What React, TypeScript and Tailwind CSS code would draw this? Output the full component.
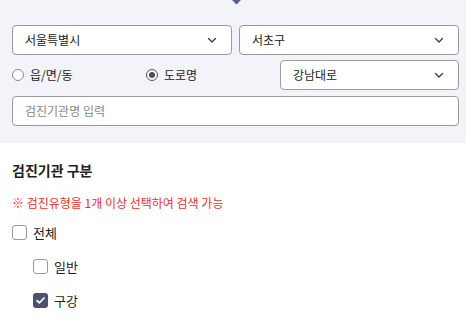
import React from "react";

const font = { fontFamily: '"Noto Sans CJK KR", "Noto Sans", sans-serif' };

function Chevron() {
  return (
    <svg width="12" height="12" viewBox="0 0 12 12" fill="none">
      <path d="M2.5 4.5l3.5 3.5 3.5-3.5" stroke="#333" strokeWidth="1.2" strokeLinecap="round" strokeLinejoin="round" />
    </svg>
  );
}

function Select({ label, className }: { label: string; className: string }) {
  return (
    <div className={`h-[30px] shrink-0 flex items-center justify-between pl-[12px] pr-[13px] bg-white border border-[#9a9a9a] rounded-[4px] ${className}`}>
      <span className="text-[12px] text-[#222] leading-none">{label}</span>
      <Chevron />
    </div>
  );
}

function Checkbox({ checked }: { checked?: boolean }) {
  return checked ? (
    <div className="w-[15px] h-[15px] rounded-[3px] bg-[#4b4f72] flex items-center justify-center">
      <svg width="11" height="11" viewBox="0 0 11 11" fill="none">
        <path d="M2 5.6l2.3 2.3L9 3" stroke="white" strokeWidth="1.7" strokeLinecap="round" strokeLinejoin="round" />
      </svg>
    </div>
  ) : (
    <div className="w-[15px] h-[15px] rounded-[3px] border border-[#9a9a9a] bg-white" />
  );
}

export default function App() {
  return (
    <div className="w-[466px] h-[319px] bg-white overflow-hidden" style={font}>
      <div className="bg-[#f3f4f9] h-[143px] relative pl-[12px] pr-[7px] pt-[25px]">
        <div className="absolute left-[233px] top-[-4px] w-[7px] h-[7px] rotate-45 bg-[#5b5f8c]" />
        <div className="flex gap-[7px]">
          <Select label="서울특별시" className="w-[220px]" />
          <Select label="서초구" className="w-[220px]" />
        </div>
        <div className="flex items-center mt-[5px] h-[30px]">
          <div className="flex items-center w-[134px]">
            <div className="w-[12px] h-[12px] rounded-full border border-[#888] bg-white" />
            <span className="ml-[6px] text-[12px] text-[#222] leading-none">읍/면/동</span>
          </div>
          <div className="flex items-center w-[134px]">
            <div className="w-[12px] h-[12px] rounded-full border border-[#555] bg-white flex items-center justify-center">
              <div className="w-[6px] h-[6px] rounded-full bg-[#4b4f72]" />
            </div>
            <span className="ml-[6px] text-[12px] text-[#222] leading-none">도로명</span>
          </div>
          <Select label="강남대로" className="w-[179px]" />
        </div>
        <div className="mt-[6px] h-[30px] bg-white border border-[#9a9a9a] rounded-[4px] flex items-center pl-[12px]">
          <span className="text-[12px] text-[#888] leading-none">검진기관명 입력</span>
        </div>
      </div>
      <div className="px-[12px]">
        <div className="mt-[20px] text-[14px] font-bold text-[#222] leading-none">검진기관 구분</div>
        <div className="mt-[20px] text-[12px] text-[#f0302a] leading-none">※ 검진유형을 1개 이상 선택하여 검색 가능</div>
        <div className="mt-[16px] flex items-center">
          <Checkbox />
          <span className="ml-[6px] text-[13px] text-[#222] leading-none">전체</span>
        </div>
        <div className="mt-[19px] ml-[21px] flex items-center">
          <Checkbox />
          <span className="ml-[6px] text-[13px] text-[#222] leading-none">일반</span>
        </div>
        <div className="mt-[19px] ml-[21px] flex items-center">
          <Checkbox checked />
          <span className="ml-[6px] text-[13px] text-[#222] leading-none">구강</span>
        </div>
      </div>
    </div>
  );
}
